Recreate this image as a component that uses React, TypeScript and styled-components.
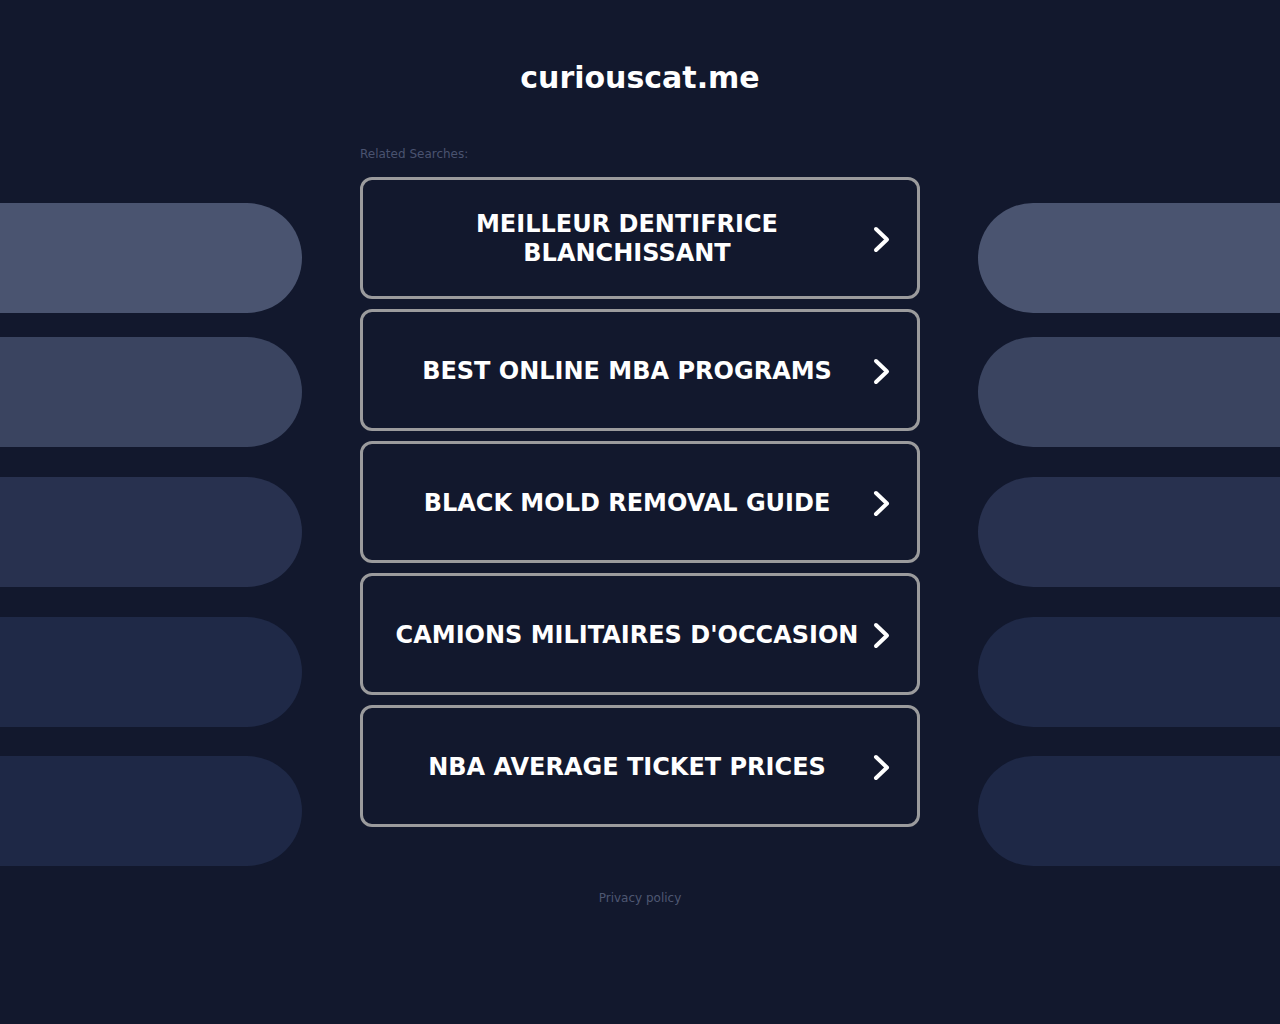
import styled, { createGlobalStyle } from "styled-components";

const GlobalStyle = createGlobalStyle`
  html, body {
    margin: 0;
    padding: 0;
    background: #12182d;
  }
  body {
    font-family: "DejaVu Sans", "Liberation Sans", sans-serif;
    color: #ffffff;
  }
`;

const Page = styled.div`
  display: grid;
  grid-template-columns: 302px 560px 302px;
  justify-content: space-between;
  min-height: 1024px;
  background: #12182d;
`;

const Side = styled.div`
  display: flex;
  flex-direction: column;
  padding-top: 203px;
`;

const Pill = styled.div<{ $side: "left" | "right"; $color: string; $top: number }>`
  height: 110px;
  margin-top: ${(props) => props.$top}px;
  background-color: ${(props) => props.$color};
  border-radius: ${(props) =>
    props.$side === "left" ? "0 55px 55px 0" : "55px 0 0 55px"};
`;

const Main = styled.main`
  display: flex;
  flex-direction: column;
  padding-top: 60px;
`;

const Title = styled.h1`
  margin: 0;
  font-size: 30px;
  line-height: 36px;
  font-weight: bold;
  text-align: center;
  color: #ffffff;
`;

const Related = styled.p`
  margin: 50px 0 15px;
  font-size: 12px;
  line-height: 16px;
  color: #4a5370;
`;

const SearchList = styled.ul`
  list-style: none;
  margin: 0;
  padding: 0;
  display: flex;
  flex-direction: column;
  gap: 10px;
`;

const SearchItem = styled.li`
  height: 122px;
  box-sizing: border-box;
  border: 3.5px solid #9b9b9d;
  border-radius: 12px;
  background: #12182d;
  a {
    display: flex;
    align-items: center;
    height: 100%;
    padding: 2px 22px 0 22px;
    box-sizing: border-box;
    color: #ffffff;
    text-decoration: none;
  }
`;

const SearchText = styled.span`
  flex: 1;
  text-align: center;
  font-size: 24px;
  line-height: 29px;
  font-weight: bold;
  text-transform: uppercase;
`;

const Arrow = styled.span`
  width: 26px;
  display: flex;
  justify-content: center;
  align-items: center;
`;

const Footer = styled.p`
  margin: 63px 0 0;
  text-align: center;
  font-size: 12px;
  line-height: 16px;
  color: #4e5772;
`;

const pills = [
  { color: "#4a5470", top: 0 },
  { color: "#3a4460", top: 24 },
  { color: "#28314f", top: 30 },
  { color: "#1f2947", top: 30 },
  { color: "#1e2846", top: 29 },
];

const searches = [
  "Meilleur dentifrice blanchissant",
  "Best Online MBA Programs",
  "Black Mold Removal Guide",
  "Camions Militaires d'Occasion",
  "NBA Average Ticket Prices",
];

function Chevron() {
  return (
    <svg width="18" height="27" viewBox="0 0 18 27" fill="none">
      <path
        d="M3 3 L14 13.5 L3 24"
        stroke="#ffffff"
        strokeWidth="4"
        strokeLinecap="round"
        strokeLinejoin="round"
      />
    </svg>
  );
}

function App() {
  return (
    <>
      <GlobalStyle />
      <Page>
        <Side>
          {pills.map((p, i) => (
            <Pill key={i} $side="left" $color={p.color} $top={p.top} />
          ))}
        </Side>
        <Main>
          <Title>curiouscat.me</Title>
          <Related>Related Searches:</Related>
          <SearchList>
            {searches.map((s) => (
              <SearchItem key={s}>
                <a href="#">
                  <SearchText>{s}</SearchText>
                  <Arrow>
                    <Chevron />
                  </Arrow>
                </a>
              </SearchItem>
            ))}
          </SearchList>
          <Footer>Privacy policy</Footer>
        </Main>
        <Side>
          {pills.map((p, i) => (
            <Pill key={i} $side="right" $color={p.color} $top={p.top} />
          ))}
        </Side>
      </Page>
    </>
  );
}

export default App;
